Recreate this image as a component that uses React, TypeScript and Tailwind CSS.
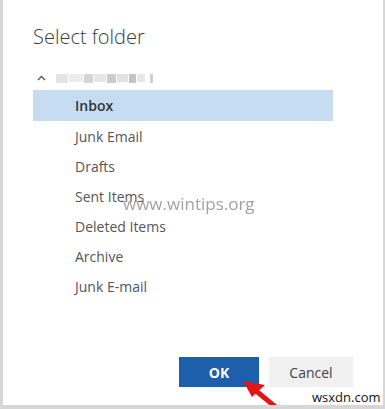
const folders = ['Junk Email', 'Drafts', 'Sent Items', 'Deleted Items', 'Archive', 'Junk E-mail'];

export default function App() {
  return (
    <div
      className="relative w-[385px] h-[409px] bg-white border-l-[3px] border-r-[2px] border-b-[4px] border-[#d6d6d6] overflow-hidden"
      style={{ fontFamily: '"Open Sans", "Noto Sans", sans-serif' }}
    >
      <div className="pl-[30px] pt-[22px] text-[20px] leading-[30px] text-[#3c3c3c] font-light">Select folder</div>

      <div className="flex items-center pl-[34px] pt-[14px] h-[38px]">
        <svg width="9" height="6" viewBox="0 0 9 6" className="mr-[10px]">
          <path d="M1 5 L4.5 1.5 L8 5" fill="none" stroke="#555" strokeWidth="1.3" />
        </svg>
        {/* blurred account name */}
        <div className="flex items-center gap-[1px] blur-[0.6px]">
          <div className="w-[12px] h-[9px] bg-[#e4e4e4]" />
          <div className="w-[14px] h-[8px] bg-[#ececec]" />
          <div className="w-[9px] h-[9px] bg-[#d4d4d4]" />
          <div className="w-[12px] h-[8px] bg-[#e6e6e6]" />
          <div className="w-[9px] h-[9px] bg-[#cccccc]" />
          <div className="w-[11px] h-[8px] bg-[#e2e2e2]" />
          <div className="w-[7px] h-[9px] bg-[#c4c4c4]" />
          <div className="w-[8px] h-[8px] bg-[#e8e8e8]" />
          <div className="ml-[4px] w-[3px] h-[9px] bg-[#cfcfcf]" />
        </div>
      </div>

      <div className="ml-[30px] w-[300px] h-[31px] bg-[#c6dcf1] flex items-center pl-[42px] text-[14px] font-semibold text-[#333]">
        Inbox
      </div>

      <div className="flex flex-col">
        {folders.map((f) => (
          <div key={f} className="h-[30px] flex items-center pl-[72px] text-[14px] text-[#555]">
            {f}
          </div>
        ))}
      </div>

      <div className="absolute left-[120px] top-[191px] text-[17px] text-[#8a8a8a] opacity-80">
        www.wintips.org
      </div>

      <div className="absolute left-[176px] top-[357px] flex gap-[10px]">
        <button className="w-[80px] h-[30px] bg-[#1d5faa] text-white text-[14px] font-bold">OK</button>
        <button className="w-[84px] h-[30px] bg-[#f0f0f0] text-[#444] text-[14px]">Cancel</button>
      </div>

      <svg className="absolute left-[237px] top-[376px]" width="42" height="33" viewBox="0 0 42 33">
        <path d="M38 33 L15 14" stroke="#e0161b" strokeWidth="5" />
        <path d="M3 5 L25 9 L12 21 Z" fill="#e0161b" />
      </svg>

      <div className="absolute left-[309px] top-[389px] text-[13px] leading-[16px] text-[#111]">wsxdn.com</div>
    </div>
  );
}
